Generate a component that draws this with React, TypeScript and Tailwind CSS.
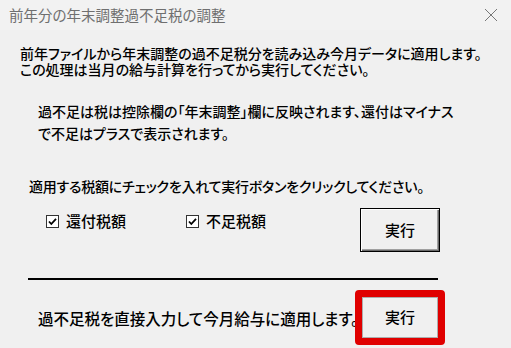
import React from "react";

const font = "font-['Noto_Sans_CJK_JP','Noto_Sans',sans-serif] [font-feature-settings:'palt']";

function CheckBox({ label }: { label: string }) {
  return (
    <label className="flex items-center gap-[7px]">
      <svg width="13" height="13" viewBox="0 0 13 13" className="shrink-0">
        <rect x="0.5" y="0.5" width="12" height="12" fill="#fff" stroke="#333" />
        <path d="M3 6.5 L5.3 9 L10 3.8" fill="none" stroke="#000" strokeWidth="1.8" />
      </svg>
      <span className="text-[15px] leading-[16px] text-black">{label}</span>
    </label>
  );
}

export default function App() {
  return (
    <div className={`${font} h-[348px] w-[511px] overflow-hidden bg-[#f0f0f0] font-medium text-black`}>
      {/* title bar */}
      <div className="flex h-[30px] items-center justify-between bg-[#f2f2f2] pl-[9px] pr-[13px]">
        <span className="text-[14.5px] font-normal leading-[16px] text-[#6f6f6f]">前年分の年末調整過不足税の調整</span>
        <svg width="14" height="14" viewBox="0 0 14 14">
          <path d="M1 1 L13 13 M13 1 L1 13" stroke="#777" strokeWidth="1" />
        </svg>
      </div>

      <p className="ml-[20px] mt-[15px] text-[14px] leading-[16px]">
        前年ファイルから年末調整の過不足税分を読み込み今月データに適用します。
        <br />
        この処理は当月の給与計算を行ってから実行してください。
      </p>

      <p className="ml-[38px] mt-[23px] text-[14px] leading-[22px]">
        過不足は税は控除欄の「年末調整」欄に反映されます、還付はマイナス
        <br />
        で不足はプラスで表示されます。
      </p>

      <p className="ml-[29px] mt-[34px] text-[14px] leading-[16px] tracking-[-0.25px]">
        適用する税額にチェックを入れて実行ボタンをクリックしてください。
      </p>

      <div className="mt-[14px] flex items-start">
        <div className="ml-[46px] mt-[5px] flex w-[314px]">
          <div className="w-[140px]">
            <CheckBox label="還付税額" />
          </div>
          <CheckBox label="不足税額" />
        </div>
        <button className="flex h-[44px] w-[80px] items-center justify-center border border-black bg-[#f0f0f0] text-[15px] shadow-[inset_1px_1px_0_#fff,inset_-1px_-1px_0_#696969,inset_-2px_-2px_0_#a0a0a0]">
          実行
        </button>
      </div>

      <div className="ml-[28px] mt-[26px] h-[2px] w-[410px] bg-black" />

      <div className="mt-[10px] flex items-center">
        <span className="ml-[38px] w-[317px] whitespace-nowrap text-[15.5px] leading-[18px]">
          過不足税を直接入力して今月給与に適用します。
        </span>
        <div className="h-[55px] w-[90px] rounded-[4px] border-[7px] border-[#e00000]">
          <button className="flex h-full w-full items-center justify-center border border-[#adadad] bg-[#f0f0f0] text-[15px]">
            実行
          </button>
        </div>
      </div>
    </div>
  );
}
